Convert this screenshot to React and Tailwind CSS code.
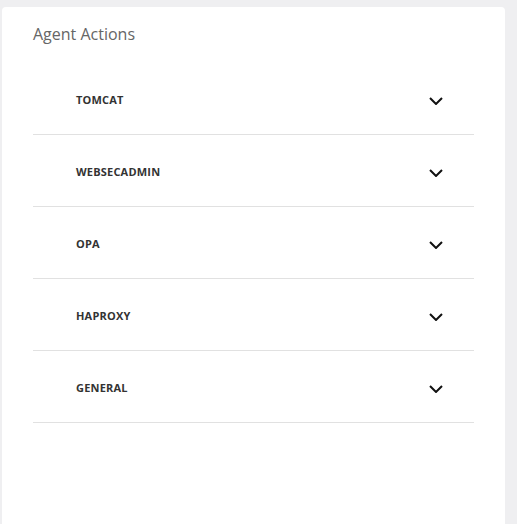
const AGENTS = ["TOMCAT", "WEBSECADMIN", "OPA", "HAPROXY", "GENERAL"];

function Chevron() {
  return (
    <svg width="14" height="8" viewBox="0 0 14 8" fill="none" className="shrink-0">
      <path d="M1 1l6 6 6-6" stroke="#111" strokeWidth="2" />
    </svg>
  );
}

export default function App() {
  return (
    <main
      className="min-h-[524px] bg-[#efeff1] pl-[2px] pr-[12px] pt-[7px]"
      style={{ fontFamily: '"Open Sans", sans-serif' }}
    >
      <section className="min-h-[517px] rounded-t-[4px] bg-white px-[31px] pt-[15px]">
        <h2 className="text-[16px] leading-[24px] text-[#666]">Agent Actions</h2>
        <ul className="mt-[17px]">
          {AGENTS.map((name) => (
            <li
              key={name}
              className="flex h-[72px] items-center justify-between border-b border-[#e1e1e1] pl-[43px] pr-[31px] pt-[4px]"
            >
              <span className="text-[11px] font-bold tracking-[0.2px] text-[#333]">
                {name}
              </span>
              <Chevron />
            </li>
          ))}
        </ul>
      </section>
    </main>
  );
}
